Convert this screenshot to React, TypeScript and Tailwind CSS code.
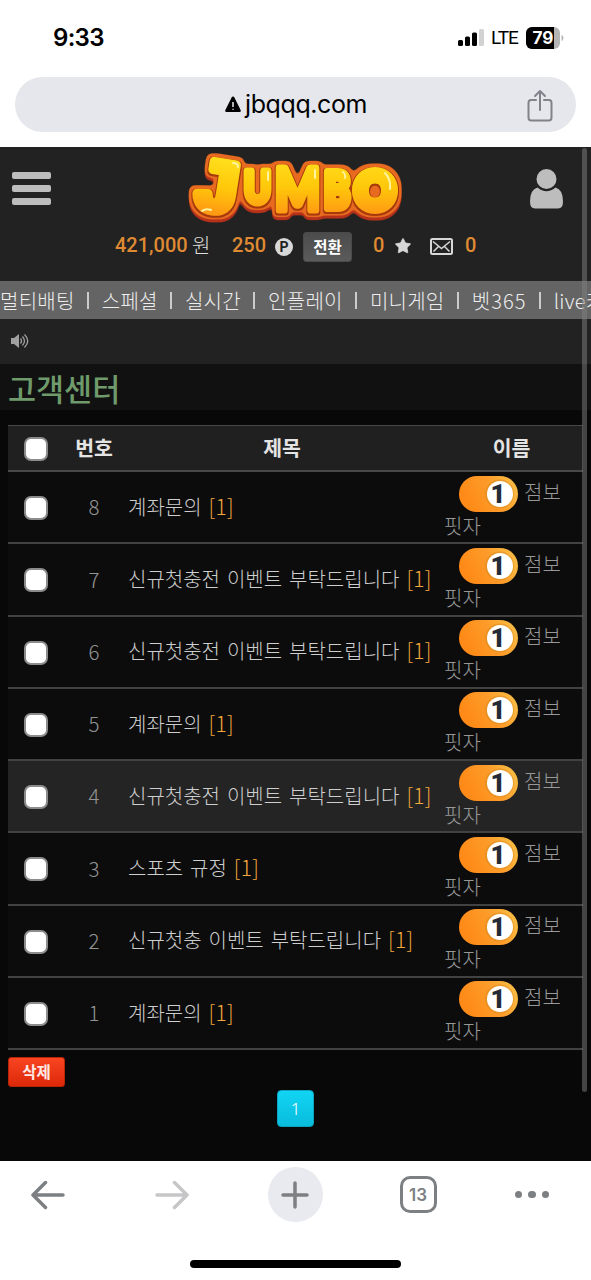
import { Star } from 'lucide-react';

const KR = "font-['Noto_Sans_CJK_KR',sans-serif]";

const menu = ['멀티배팅', '스페셜', '실시간', '인플레이', '미니게임', '벳365', 'live카지노'];

const posts = [
    { no: 8, title: '계좌문의' },
    { no: 7, title: '신규첫충전 이벤트 부탁드립니다' },
    { no: 6, title: '신규첫충전 이벤트 부탁드립니다' },
    { no: 5, title: '계좌문의' },
    { no: 4, title: '신규첫충전 이벤트 부탁드립니다', active: true },
    { no: 3, title: '스포츠 규정' },
    { no: 2, title: '신규첫충 이벤트 부탁드립니다' },
    { no: 1, title: '계좌문의' },
];

const Logo = () => (
    <svg width="216" height="78" viewBox="0 0 216 78" fontFamily="Lato" fontWeight="900" strokeLinejoin="round" className="overflow-visible">
        <defs>
            <linearGradient id="gold" gradientUnits="userSpaceOnUse" x1="0" y1="8" x2="0" y2="66">
                <stop offset="0" stopColor="#ffdf1c" />
                <stop offset="0.5" stopColor="#ffc80a" />
                <stop offset="1" stopColor="#ff9614" />
            </linearGradient>
            {/* grows a shadow, an orange rim and a thin dark line around the letters */}
            <filter id="bubble" filterUnits="userSpaceOnUse" x="-10" y="-6" width="236" height="90" colorInterpolationFilters="sRGB">
                <feMorphology in="SourceAlpha" operator="dilate" radius="3" />
                <feGaussianBlur stdDeviation="2" />
                <feComponentTransfer result="wide">
                    <feFuncA type="linear" slope="5" intercept="-1.500" />
                </feComponentTransfer>
                <feOffset in="wide" dy="3" result="low" />
                <feFlood floodColor="#b5311a" />
                <feComposite in2="low" operator="in" result="shadow" />
                <feFlood floodColor="#e86a20" />
                <feComposite in2="wide" operator="in" result="rim" />
                <feMorphology in="SourceAlpha" operator="dilate" radius="1" />
                <feOffset dy="0.500" result="near" />
                <feFlood floodColor="#a63a0c" />
                <feComposite in2="near" operator="in" result="line" />
                <feMerge>
                    <feMergeNode in="shadow" />
                    <feMergeNode in="rim" />
                    <feMergeNode in="line" />
                    <feMergeNode in="SourceGraphic" />
                </feMerge>
            </filter>
        </defs>
        <g filter="url(#bubble)" fill="url(#gold)" stroke="url(#gold)">
            <text x="6" y="61" fontSize="74" strokeWidth="9" textLength="46" lengthAdjust="spacingAndGlyphs" fontFamily="Liberation Mono" fontWeight="700" transform="rotate(9 30 40)">J</text>
            <text x="56" y="53" fontSize="44" strokeWidth="7" textLength="27" lengthAdjust="spacingAndGlyphs">U</text>
            <text x="87" y="60" fontSize="58" strokeWidth="7" textLength="45" lengthAdjust="spacingAndGlyphs">M</text>
            <text x="136" y="58" fontSize="50" strokeWidth="8" textLength="26" lengthAdjust="spacingAndGlyphs">B</text>
            <text x="167" y="59" fontSize="52" strokeWidth="10" textLength="40" lengthAdjust="spacingAndGlyphs">O</text>
        </g>
        <g fill="none" stroke="#fff3a0" strokeWidth="2" strokeLinecap="round">
            <path d="M45 13q5 0 5 4M14 61q4-3 9-1M80 22v8M127 20v8M155 22q3 2 2 6M197 23q6 6 5 16" />
        </g>
    </svg>
);

const Checkbox = () => (
    <span className="size-6 rounded-[7px] border-2 border-[#8c8c8c] bg-white" />
);

const LevelBadge = () => (
    <svg width="59" height="36" viewBox="0 0 59 36" className="shrink-0">
        <defs>
            <linearGradient id="level" x1="0" y1="0.3" x2="1" y2="0">
                <stop offset="0" stopColor="#ff8a17" />
                <stop offset="0.5" stopColor="#fc9c2a" />
                <stop offset="1" stopColor="#f7c34a" />
            </linearGradient>
        </defs>
        <rect width="59" height="36" rx="18" fill="url(#level)" />
        <circle cx="40.5" cy="18" r="14.5" fill="#dd8d20" opacity="0.6" />
        <circle cx="41" cy="18" r="13" fill="#fff" />
        <text x="39" y="27" textAnchor="middle" fontFamily="Roboto" fontWeight="900" fontSize="26" fill="#252b36">1</text>
    </svg>
);

const StatusBar = () => (
    <div className="flex h-[77px] items-center pb-[2px] pl-[53px] pr-[27px] text-black">
        <span className="font-['Inter'] text-[24px] font-semibold tracking-[-0.7px]">9:33</span>
        <svg width="27" height="17" viewBox="0 0 27 17" className="ml-auto">
            <rect x="0" y="11" width="5" height="6" rx="1.5" />
            <rect x="7" y="7.500" width="5" height="9.500" rx="1.500" />
            <rect x="14" y="3.500" width="5" height="13.500" rx="1.500" />
            <rect x="21" y="0" width="5" height="17" rx="1.500" fill="#d2d2d2" />
        </svg>
        <span className="ml-[6px] mt-[2px] w-[30px] font-['Roboto'] text-[19px] tracking-[-1px]">LTE</span>
        <svg width="38" height="22" viewBox="0 0 38 22" className="ml-[5px]">
            <rect width="34" height="22" rx="6" fill="#b4b4b4" />
            <path d="M6 0h22v22H6a6 6 0 0 1-6-6V6a6 6 0 0 1 6-6z" fill="#000" />
            <path d="M35.500 8c2.500 1 2.500 5 0 6z" fill="#b4b4b4" />
            <text x="17" y="17" textAnchor="middle" fontFamily="Inter" fontWeight="700" fontSize="17" textLength="21" lengthAdjust="spacingAndGlyphs" fill="#fff">79</text>
        </svg>
    </div>
);

const AddressBar = () => (
    <div className="mx-[15px] mb-[15px] flex h-[55px] items-center rounded-full bg-[#e5e7ec]">
        <div className="ml-[210px] flex items-center">
            <svg width="16" height="17" viewBox="0 0 16 17">
                <path d="M8 0.500q.9 0 1.400 1l6.200 12.500q.8 2-1.200 2H1.600q-2 0-1.200-2L6.600 1.500q.5-1 1.400-1z" />
                <path d="M8 6v5M8 12.800v1" stroke="#e5e7ec" strokeWidth="1.500" />
            </svg>
            <span className="ml-1 font-['Inter'] text-[25px] tracking-[-0.4px] text-black">jbqqq.com</span>
        </div>
        <svg width="26" height="33" viewBox="0 0 26 33" fill="none" stroke="#80848a" strokeWidth="2" strokeLinecap="round" strokeLinejoin="round" className="ml-auto mr-[23px] mt-px">
            <path d="M9 11H4q-2.500 0-2.500 3v14.500q0 3 2.500 3h18q2.500 0 2.500-3V14q0-3-2.500-3h-5M13 21V2M8 7l5-5 5 5" />
        </svg>
    </div>
);

const Header = () => (
    <div className="h-[134px] bg-[#222] pt-[3px]">
        <div className="flex h-[80px] items-start pl-3">
            <div className="mt-[22px] flex flex-col gap-[6px]">
                <span className="h-[7px] w-[39px] rounded-[2px] bg-[#bdbdbd]" />
                <span className="h-[7px] w-[39px] rounded-[2px] bg-[#bdbdbd]" />
                <span className="h-[7px] w-[39px] rounded-[2px] bg-[#bdbdbd]" />
            </div>
            <div className="ml-[137px]">
                <Logo />
            </div>
            <svg width="34" height="41" viewBox="0 0 34 41" fill="#bdbdbd" className="ml-[126px] mt-[19px]">
                <circle cx="16.500" cy="10" r="10" />
                <path d="M7.500 18.500Q16.500 26 25.500 18.500q7.500 2 7.500 14 0 7-5 7H5q-5 0-5-7Q0 20.500 7.500 18.500z" />
            </svg>
        </div>
        <div className="flex h-8 items-center pl-[115px] font-['Roboto'] text-[20px] font-medium text-[#df8a33]">
            <span className="-mt-[3px] w-[72px]">421,000</span>
            <span className={`${KR} ml-[5px] -mt-[3px] w-[20px] text-[20px] font-light text-[#ddd]`}>원</span>
            <span className="ml-[20px] -mt-[3px] w-[34px]">250</span>
            <span className="ml-[9px] mt-px flex size-[18px] items-center justify-center rounded-full bg-[#d8d8d8] text-[14px] font-bold leading-none text-[#222]">P</span>
            <button className={`${KR} ml-[10px] mt-[2px] h-[30px] w-[49px] rounded-[3px] border border-[#4a4a4a] bg-linear-to-b from-[#4c4c4c] to-[#5b5b5b] text-[15.500px] font-bold leading-none text-white`}>
                전환
            </button>
            <span className="ml-[21px] -mt-[3px] w-[12px]">0</span>
            <Star size={18} fill="#d8d8d8" color="#d8d8d8" strokeWidth={1} className="ml-[9px]" />
            <svg width="23" height="17" viewBox="0 0 23 17" fill="none" stroke="#d8d8d8" strokeWidth="2" className="ml-[18px]">
                <rect x="1" y="1" width="21" height="15" rx="1.500" />
                <path d="M3 3.500l8.500 7 8.500-7M3.500 13.500l5-5M19.500 13.500l-5-5" strokeWidth="1.500" />
            </svg>
            <span className="ml-[12px] -mt-[3px]">0</span>
        </div>
    </div>
);

const MenuBar = () => (
    <div className={`${KR} flex h-[38px] items-center overflow-hidden whitespace-nowrap bg-[#646464] pt-px text-[20px] font-light tracking-[0.25px] text-[#eee]`}>
        {menu.map((item, i) => (
            <div key={item} className="flex shrink-0 items-center">
                {i > 0 && (
                    <span className="flex w-[27.200px] justify-center">
                        <span className="h-[17px] w-[2px] bg-[#ccc]" />
                    </span>
                )}
                <span className={/\d/.test(item) ? 'tracking-[1.1px]' : ''}>{item}</span>
            </div>
        ))}
    </div>
);

const PostTable = () => (
    <div className={`${KR} ml-2 mr-2 mt-[15px]`}>
        <div className="grid h-[47px] grid-cols-[56px_60px_316px_143px] items-center border-b-2 border-t border-b-[#484848] border-t-[#484848] bg-[#202020] pb-px text-[20.500px] font-bold text-[#e4e4e4]">
            <div className="flex justify-center pt-[3px]">
                <Checkbox />
            </div>
            <div className="text-center">번호</div>
            <div className="text-center">제목</div>
            <div className="text-center">이름</div>
        </div>
        {posts.map((post) => (
            <div
                key={post.no}
                className={`grid h-[72.25px] grid-cols-[56px_60px_316px_143px] items-center border-b-2 border-[#424242] ${post.active ? 'bg-[#242424]' : 'bg-[#0c0c0c]'}`}
            >
                <div className="flex justify-center pt-[2px]">
                    <Checkbox />
                </div>
                <div className="pb-px text-center text-[20.500px] font-light text-[#949494]">{post.no}</div>
                <div className="whitespace-nowrap pb-px pl-1 text-[20px] font-light text-[#cecece] [word-spacing:2.500px]">
                    {post.title} <span className="text-[21px] tracking-[0.3px] text-[#f5aa3e]">[1]</span>
                </div>
                <div className="flex flex-col pl-1 text-[20px] font-light text-[#989898]">
                    <div className="flex h-9 pl-[15px]">
                        <LevelBadge />
                        <span className="ml-[6px] leading-[32px]">점보</span>
                    </div>
                    <div className="h-[27px] leading-[27px]">핏자</div>
                </div>
            </div>
        ))}
    </div>
);

const BrowserToolbar = () => (
    <div className="flex h-[119px] flex-col items-center bg-white">
        <div className="flex h-[67px] w-full items-center justify-between px-[31px]">
            <svg width="34" height="32" viewBox="0 0 34 32" fill="none" stroke="#7c8083" strokeWidth="3.500" strokeLinecap="round" strokeLinejoin="round">
                <path d="M32 16H2M14.500 3.500L2 16l12.500 12.500" />
            </svg>
            <svg width="34" height="32" viewBox="0 0 34 32" fill="none" stroke="#c6c6c8" strokeWidth="3.500" strokeLinecap="round" strokeLinejoin="round" className="ml-[34px]">
                <path d="M2 16h30M19.500 3.500L32 16 19.500 28.500" />
            </svg>
            <div className="ml-[23px] flex h-[55px] w-[55px] items-center justify-center rounded-full bg-[#e9eaef]">
                <svg width="28" height="28" viewBox="0 0 28 28" stroke="#7c8083" strokeWidth="3.500" strokeLinecap="round">
                    <path d="M2 14h24M14 2v24" />
                </svg>
            </div>
            <div className="ml-[21px] flex h-[37px] w-[37px] items-center justify-center rounded-[10px] border-[3px] border-[#7c8083] pt-px font-['Inter'] text-[17px] font-semibold leading-none text-[#7c8083]">
                13
            </div>
            <div className="ml-[22px] mr-[11px] flex gap-[6px]">
                <span className="size-[7.500px] rounded-full bg-[#7c8083]" />
                <span className="size-[7.500px] rounded-full bg-[#7c8083]" />
                <span className="size-[7.500px] rounded-full bg-[#7c8083]" />
            </div>
        </div>
        <div className="mt-[32px] h-[8px] w-[211px] rounded-full bg-black" />
    </div>
);

export default function App() {
    return (
        <div className="h-[1280px] w-[591px] overflow-hidden bg-white">
            <StatusBar />
            <AddressBar />
            <div className="relative h-[1014px] bg-[#080808]">
                <Header />
                <MenuBar />
                <div className="flex h-[45px] items-center bg-[#222] pb-[2px] pl-[11px]">
                    <svg width="19" height="16" viewBox="0 0 19 16" fill="none" stroke="#a0a0a0" strokeWidth="1.300">
                        <path d="M0 5h3l5-4v14l-5-4H0z" fill="#a0a0a0" stroke="none" />
                        <path d="M9.500 5.500q2 2.500 0 5M11.500 3.500q4 4.500 0 9M13.500 1.500q6.500 6.500 0 13" />
                    </svg>
                </div>
                <h1 className={`${KR} h-[46px] bg-[#111] pl-2 text-[30.500px] font-medium leading-[48px] text-[#6f9a6b]`}>
                    고객센터
                </h1>
                <PostTable />
                <div className={`${KR} px-2`}>
                    <button className="mt-[7px] block h-[30px] w-[57px] rounded-[3px] border border-[#b82408] bg-linear-to-b from-[#f94420] to-[#dc2808] text-[15.500px] font-bold leading-none text-[#ffe9e4]">
                        삭제
                    </button>
                    <button className="mx-auto mt-[3px] block size-[37px] rounded-[4px] border border-[#0ba3c0] bg-linear-to-b from-[#12d4f4] to-[#09bcdc] font-['Noto_Sans'] text-[17px] font-light leading-none text-white">
                        1
                    </button>
                </div>
                <div className="absolute right-[4px] top-px h-[944px] w-[5px] rounded-full bg-[#808080]/50" />
            </div>
            <BrowserToolbar />
        </div>
    );
}
